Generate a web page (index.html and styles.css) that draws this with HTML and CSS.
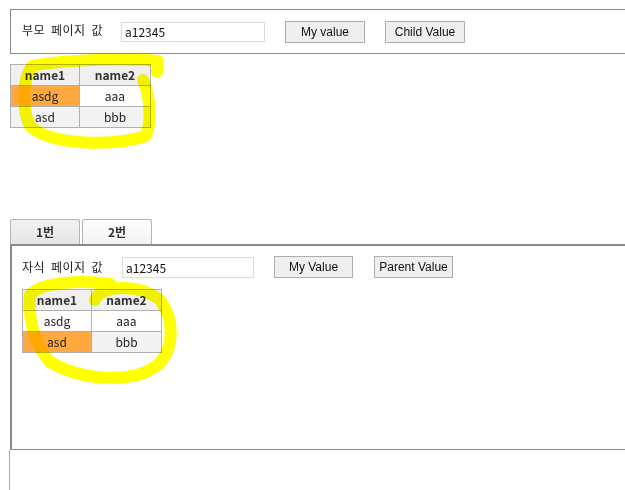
FILE: index.html
```html
<!DOCTYPE html>
<html lang="ko">
<head>
<meta charset="utf-8">
<title>Parent / Child</title>
<link rel="stylesheet" href="styles.css">
</head>
<body>
<div class="page">
  <div class="parent-box">
    <span class="label label-parent">부모 페이지 값</span>
    <input class="field field-parent" type="text" value="a12345">
    <button class="btn btn-a">My value</button>
    <button class="btn btn-b">Child Value</button>
  </div>

  <table class="grid grid-parent">
    <tr><th>name1</th><th>name2</th></tr>
    <tr><td class="sel">asdg</td><td>aaa</td></tr>
    <tr class="alt"><td>asd</td><td>bbb</td></tr>
  </table>

  <div class="tabs">
    <div class="tab tab-active">1번</div>
    <div class="tab">2번</div>
  </div>
  <div class="panel">
    <div class="child-row">
      <span class="label label-child">자식 페이지 값</span>
      <input class="field field-child" type="text" value="a12345">
      <button class="btn btn-c">My Value</button>
      <button class="btn btn-d">Parent Value</button>
    </div>
    <table class="grid grid-child">
      <tr><th>name1</th><th>name2</th></tr>
      <tr><td>asdg</td><td>aaa</td></tr>
      <tr class="alt"><td class="sel">asd</td><td>bbb</td></tr>
    </table>
  </div>
  <div class="rest"></div>

  <svg class="marker" width="625" height="490" viewBox="0 0 625 490">
    <path d="M157,72 L158,61 C120,58 60,60 32,66 C22,80 22,110 30,126 C50,145 110,147 146,136 C152,120 150,95 143,80" />
    <path d="M95,300 C100,285 140,283 160,300 C175,320 175,352 155,367 C130,384 80,380 50,362 C35,345 28,320 30,295 C40,282 80,280 110,284" />
  </svg>
</div>
</body>
</html>
```

FILE: styles.css
```css
html, body {
  margin: 0;
  padding: 0;
  background: #fff;
  overflow: hidden;
}

.page {
  position: relative;
  width: 625px;
  height: 490px;
  padding-top: 9px;
  box-sizing: border-box;
  font-family: "Noto Sans CJK KR", "Noto Sans", sans-serif;
  font-size: 12px;
  color: #222;
}

.parent-box {
  display: flex;
  align-items: center;
  margin-left: 10px;
  margin-right: -20px;
  height: 43px;
  border: 1px solid #8a8a8a;
  padding-left: 11px;
}

.label {
  font-family: "Noto Sans CJK KR", sans-serif;
  font-size: 12px;
  color: #222;
  letter-spacing: 0.5px;
  word-spacing: 2px;
}
.label-parent { flex: 0 0 99px; margin-top: -5px; }
.label-child { flex: 0 0 100px; margin-top: -1px; }

.field {
  box-sizing: border-box;
  border: 1px solid #dcdcdc;
  height: 20px;
  padding: 0 0 0 3px;
  font-family: "Noto Sans CJK KR", sans-serif;
  font-size: 12px;
  color: #111;
  outline: none;
}
.field-parent { width: 144px; }
.field-child { width: 132px; height: 21px; }

.btn {
  box-sizing: border-box;
  height: 22px;
  border: 1px solid #adadad;
  background: #efefef;
  font-family: "Liberation Sans", Arial, sans-serif;
  font-size: 12px;
  color: #111;
  padding: 0;
  border-radius: 0;
}
.btn-a { margin-left: 20px; width: 80px; }
.btn-b { margin-left: 20px; width: 80px; }
.btn-c { margin-left: 20px; width: 79px; }
.btn-d { margin-left: 21px; width: 79px; }

.grid {
  border-collapse: collapse;
  font-family: "Noto Sans CJK KR", sans-serif;
  font-size: 12px;
  color: #222;
}
.grid th, .grid td {
  border: 1px solid #b0b0b0;
  height: 20px;
  padding: 0;
  text-align: center;
  line-height: 20px;
}
.grid th {
  background: #f0f0f0;
  font-weight: bold;
  color: #333;
}
.grid td { background: #fff; }
.grid .alt td { background: #f3f3f3; }
.grid td.sel, .grid .alt td.sel { background: #ffa940; }

.grid-parent {
  margin: 10px 0 0 10px;
}
.grid-parent th:first-child { width: 68px; }
.grid-parent th:last-child { width: 70px; }

.tabs {
  display: flex;
  gap: 2px;
  margin: 91px 0 0 10px;
  height: 25px;
}
.tab {
  box-sizing: border-box;
  width: 70px;
  height: 25px;
  border: 1px solid #b4b4b4;
  border-bottom: none;
  border-radius: 3px 3px 0 0;
  background: linear-gradient(#ffffff, #f2f2f2);
  text-align: center;
  line-height: 24px;
  font-weight: bold;
  color: #333;
}
.tab-active {
  background: linear-gradient(#f2f2f2, #e6e6e6);
}

.panel {
  box-sizing: border-box;
  margin-left: 10px;
  margin-right: -20px;
  height: 206px;
  border-top: 2px solid #8a8a8a;
  border-left: 2px solid #8a8a8a;
  border-bottom: 1px solid #8a8a8a;
  padding: 10px 0 0 10px;
}

.child-row {
  display: flex;
  align-items: center;
  height: 22px;
}

.grid-child {
  margin-top: 11px;
}
.grid-child th:first-child { width: 68px; }
.grid-child th:last-child { width: 69px; }

.rest {
  margin-left: 9px;
  height: 40px;
  border-left: 1px solid #a8a8a8;
}

.marker {
  position: absolute;
  left: 0;
  top: 0;
  pointer-events: none;
  mix-blend-mode: multiply;
}
.marker path {
  fill: none;
  stroke: #ffff00;
  stroke-width: 12;
  stroke-linecap: round;
  stroke-linejoin: round;
}
```
